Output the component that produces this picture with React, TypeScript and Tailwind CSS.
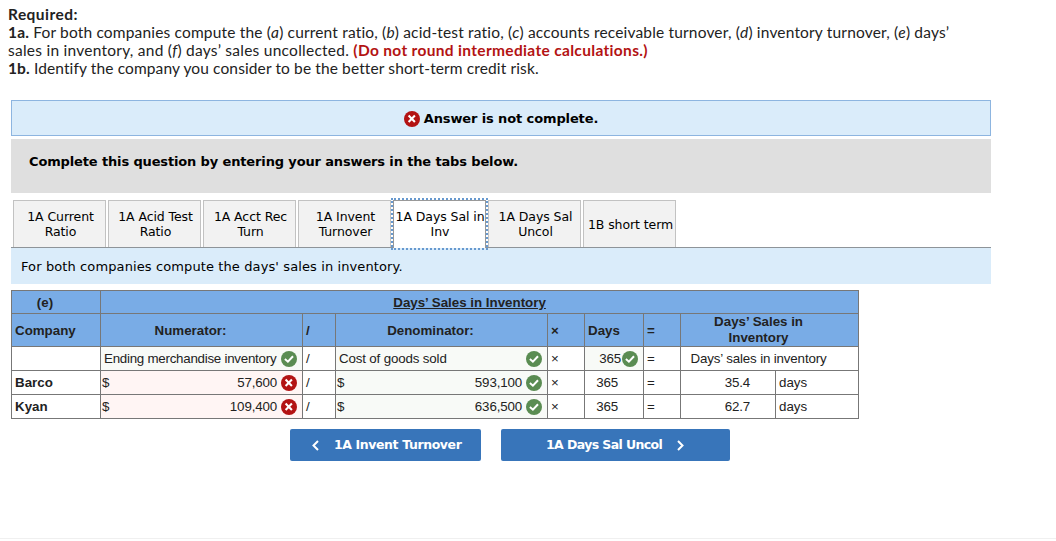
import React from 'react'

type IconProps = { className?: string }

const WrongIcon: React.FC<IconProps> = ({ className }) => (
  <svg className={className} width="16" height="16" viewBox="0 0 16 16" fill="none">
    <circle cx="8" cy="8" r="8" fill="#b31313" />
    <path d="M4.6 4.6L10.9 10.9M10.9 4.6L4.6 10.9" stroke="#fff" strokeWidth="2.1" />
  </svg>
)

const CorrectIcon: React.FC<IconProps> = ({ className }) => (
  <svg className={className} width="16" height="16" viewBox="0 0 16 16" fill="none">
    <circle cx="8" cy="8" r="8" fill="#5a8c52" />
    <path d="M3.9 8.1L6.9 10.7L12 5.3" stroke="#fff" strokeWidth="2" />
  </svg>
)

const tabs = [
  ['1A Current', 'Ratio'],
  ['1A Acid Test', 'Ratio'],
  ['1A Acct Rec', 'Turn'],
  ['1A Invent', 'Turnover'],
  ['1A Days Sal in', 'Inv'],
  ['1A Days Sal', 'Uncol'],
  ['1B short term'],
]

const activeTab = 4

const companies = [
  { name: 'Barco', numerator: '57,600', denominator: '593,100', result: '35.4' },
  { name: 'Kyan', numerator: '109,400', denominator: '636,500', result: '62.7' },
]

const cell = 'border-l border-t border-[#777] p-0'
const head = 'border-l border-t border-[#777] bg-[#79ace6] px-0 pb-0 pt-0.5 font-bold tracking-normal'

const Instructions: React.FC = () => (
  <div className="pt-[5px] pl-2 font-['Lato',sans-serif] text-[15.5px] leading-[18px] whitespace-nowrap text-[#222]">
    <p className="font-bold tracking-[0.45px]">Required:</p>
    <p className="tracking-[0.17px]">
      <b>1a.</b> For both companies compute the (<i>a</i>) current ratio, (<i>b</i>) acid-test ratio, (<i>c</i>) accounts receivable
      turnover, (<i>d</i>) inventory turnover, (<i>e</i>) days’
    </p>
    <p className="tracking-[0.25px]">
      sales in inventory, and (<i>f</i>) days’ sales uncollected.{' '}
      <b className="tracking-[0.33px] text-[#b31313]">(Do not round intermediate calculations.)</b>
    </p>
    <p className="tracking-[0.12px]">
      <b>1b.</b> Identify the company you consider to be the better short-term credit risk.
    </p>
  </div>
)

const TabBar: React.FC = () => (
  <div className="mt-[7px] flex h-[47px] gap-0.5 pl-0.5 text-[12.5px] leading-[15px] tracking-[-0.08px]">
    {tabs.map((lines, i) => (
      <button
        key={i}
        className={
          i === activeTab
            ? 'z-10 flex h-12 w-[93px] flex-col items-center justify-center border border-b-0 border-[#999] bg-white pb-px pl-px whitespace-nowrap outline-2 outline-dotted outline-[#6799cf]'
            : 'flex h-[47px] w-[93px] flex-col items-center justify-center border border-b-0 border-[#c2c2c2] bg-[#f2f2f2] pl-0.5 whitespace-nowrap'
        }
      >
        {lines.map((line) => (
          <span key={line}>{line}</span>
        ))}
      </button>
    ))}
  </div>
)

const RatioTable: React.FC = () => (
  <table className="mt-[6px] w-[848px] table-fixed border-separate border-spacing-0 border-r border-b border-[#777] font-['Liberation_Sans',Arial,sans-serif] text-[13.33px] leading-4 tracking-[-0.15px] whitespace-nowrap text-[#222]">
    <colgroup>
      <col className="w-[89px]" />
      <col className="w-[202px]" />
      <col className="w-[33px]" />
      <col className="w-[212px]" />
      <col className="w-[37px]" />
      <col className="w-[59px]" />
      <col className="w-[37px]" />
      <col className="w-[95px]" />
      <col className="w-[83px]" />
    </colgroup>
    <tbody>
      <tr className="h-[23px]">
        <td className={`${head} pr-[22px] text-center`}>(e)</td>
        <td className={`${head} pr-5 text-center underline`} colSpan={8}>
          Days’ Sales in Inventory
        </td>
      </tr>
      <tr className="h-[33px]">
        <td className={`${head} pl-[3px]`}>Company</td>
        <td className={`${head} pr-[22px] text-center`}>Numerator:</td>
        <td className={`${head} pl-[3px]`}>/</td>
        <td className={`${head} pr-[22px] text-center`}>Denominator:</td>
        <td className={`${head} pl-[3px]`}>×</td>
        <td className={`${head} pl-[3px]`}>Days</td>
        <td className={`${head} pl-[3px]`}>=</td>
        <td className="border-t border-l border-[#777] bg-[#79ace6] p-0 pr-[22px] text-center font-bold tracking-normal" colSpan={2}>
          Days’ Sales in
          <br />
          Inventory
        </td>
      </tr>
      <tr className="h-6">
        <td className={cell} />
        <td className={`${cell} bg-[#f8faf7] pl-[3px]`}>
          <div className="flex items-center justify-between pr-[5px]">
            <span className="tracking-[-0.25px]">Ending merchandise inventory</span>
            <CorrectIcon />
          </div>
        </td>
        <td className={`${cell} pl-[3px]`}>/</td>
        <td className={`${cell} bg-[#f8faf7] pl-[3px]`}>
          <div className="flex items-center justify-between pr-[5px]">
            Cost of goods sold
            <CorrectIcon />
          </div>
        </td>
        <td className={`${cell} pl-[3px]`}>×</td>
        <td className={`${cell} bg-[#f8faf7]`}>
          <div className="flex items-center justify-end gap-px pr-[5px]">
            365
            <CorrectIcon />
          </div>
        </td>
        <td className={`${cell} pl-[3px]`}>=</td>
        <td className={`${cell} pr-[22px] text-center`} colSpan={2}>
          Days’ sales in inventory
        </td>
      </tr>
      {companies.map((company) => (
        <tr key={company.name} className="h-6">
          <td className={`${cell} pl-[3px] font-bold tracking-normal`}>{company.name}</td>
          <td className={`${cell} bg-[#fff5f4] pl-px`}>
            <div className="flex items-center gap-1 pr-[5px]">
              <span className="flex-1">$</span>
              {company.numerator}
              <WrongIcon />
            </div>
          </td>
          <td className={`${cell} pl-[3px]`}>/</td>
          <td className={`${cell} bg-[#f8faf7] pl-px`}>
            <div className="flex items-center gap-1 pr-[5px]">
              <span className="flex-1">$</span>
              {company.denominator}
              <CorrectIcon />
            </div>
          </td>
          <td className={`${cell} pl-[3px]`}>×</td>
          <td className={`${cell} pr-[25px] text-right`}>365</td>
          <td className={`${cell} pl-[3px]`}>=</td>
          <td className={`${cell} pr-[25px] text-right`}>{company.result}</td>
          <td className={`${cell} pl-[3px] tracking-normal`}>days</td>
        </tr>
      ))}
    </tbody>
  </table>
)

const PagerButtons: React.FC = () => (
  <div className="mt-[10px] ml-[279px] flex gap-5 text-[12.5px] font-bold whitespace-nowrap text-white">
    <button className="flex h-8 w-[191px] items-center rounded-xs bg-[#3875ba] pt-px pl-[21px]">
      <svg width="9" height="11" viewBox="0 0 9 11" fill="none">
        <path d="M7 1L2.5 5.5L7 10" stroke="#fff" strokeWidth="2" />
      </svg>
      <span className="ml-[14px] tracking-[-0.4px]">1A Invent Turnover</span>
    </button>
    <button className="flex h-8 w-[229px] items-center rounded-xs bg-[#3875ba] pt-px pl-[45px]">
      <span className="tracking-[-0.6px]">1A Days Sal Uncol</span>
      <svg className="ml-[14px]" width="9" height="11" viewBox="0 0 9 11" fill="none">
        <path d="M2 1L6.5 5.5L2 10" stroke="#fff" strokeWidth="2" />
      </svg>
    </button>
  </div>
)

export default function App() {
  return (
    <div className="flex h-[541px] w-[1056px] flex-col overflow-hidden bg-white">
      <Instructions />
      <main className="mt-[23px] ml-[11px] w-[980px] font-['DejaVu_Sans',Verdana,sans-serif] text-black">
        <div className="flex h-9 items-center justify-center gap-1 border border-[#8db5e0] bg-[#daecfa] pt-px text-[13px] font-bold tracking-[-0.12px]">
          <WrongIcon />
          Answer is not complete.
        </div>
        <div className="mt-[3px] h-[54px] bg-[#dfdfdf] pt-[14px] pl-[18px] text-[13px] leading-[18px] font-bold tracking-[-0.14px]">
          Complete this question by entering your answers in the tabs below.
        </div>
        <TabBar />
        <div className="h-[37px] border-t border-[#8e9499] bg-[#daecfa] pt-[10px] pl-[10px] text-[13px] leading-[18px] tracking-[0.11px]">
          For both companies compute the days' sales in inventory.
        </div>
        <RatioTable />
        <PagerButtons />
      </main>
      <div className="mt-auto mb-0.5 h-px bg-[#f0f0f0]" />
    </div>
  )
}
